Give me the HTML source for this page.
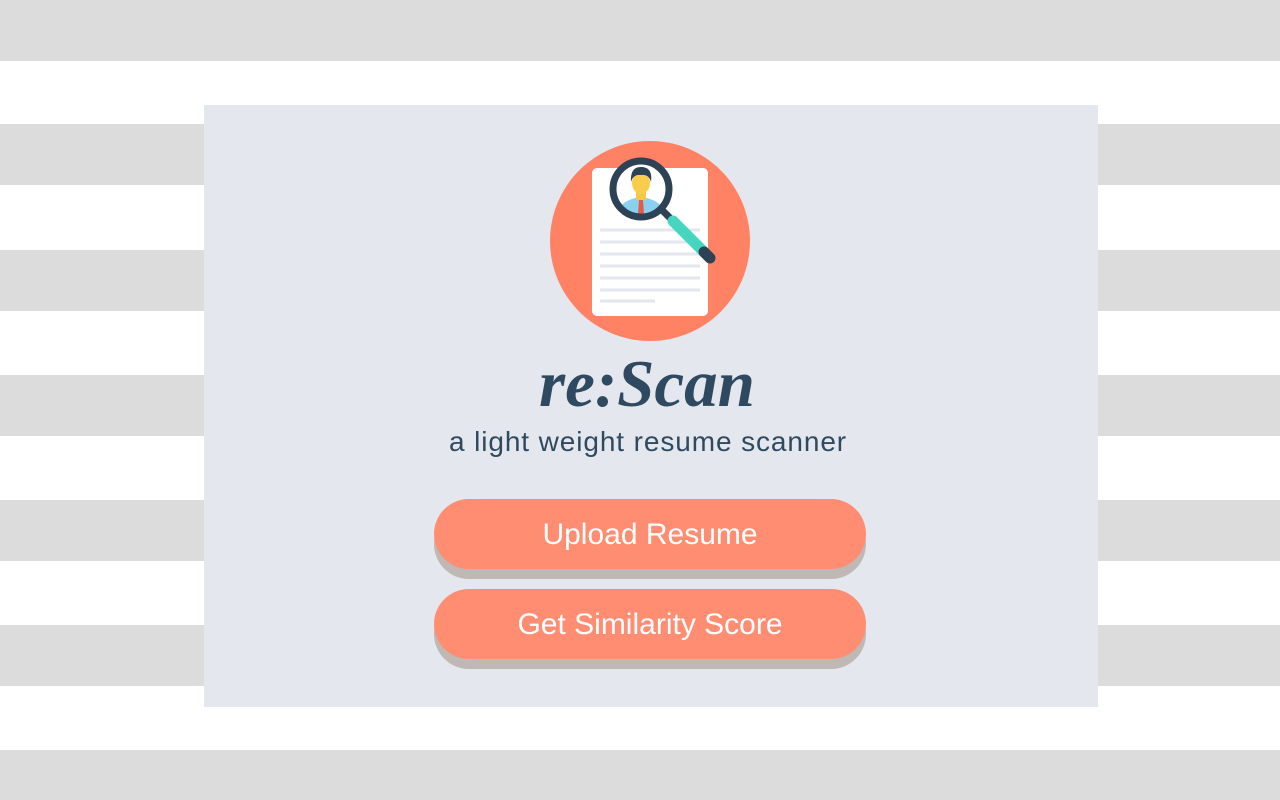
<!DOCTYPE html>
<html><head><style>
html,body{margin:0;padding:0;width:1280px;height:800px;overflow:hidden;background:#fff;position:relative;font-family:"Liberation Sans",sans-serif}
.s{position:absolute;left:0;width:1280px;background:#dcdcdc}
.card{position:absolute;left:204px;top:105px;width:894px;height:602px;background:#e4e7ed}
.title{position:absolute;left:7px;width:1280px;top:346px;text-align:center;font-family:"Liberation Serif",serif;font-style:italic;font-weight:bold;font-size:67px;color:#2f4a60}
.sub{position:absolute;left:8px;width:1280px;top:426px;text-align:center;font-size:28px;letter-spacing:0.9px;color:#2f4a60}
.btn{position:absolute;left:434px;width:432px;height:70px;border-radius:35px;background:#ff8d72;color:#fff;font-size:30px;text-align:center;line-height:72px;box-shadow:0 10px 0 #c0b8b5}
</style></head><body>
<div class="s" style="top:0;height:61px"></div>
<div class="s" style="top:124px;height:61px"></div>
<div class="s" style="top:250px;height:61px"></div>
<div class="s" style="top:375px;height:61px"></div>
<div class="s" style="top:500px;height:61px"></div>
<div class="s" style="top:625px;height:61px"></div>
<div class="s" style="top:750px;height:50px"></div>
<div class="card"></div>
<svg style="position:absolute;left:0;top:0" width="1280" height="800">
<circle cx="650" cy="241" r="100" fill="#ff8264"/>
<rect x="592" y="168" width="116" height="148" rx="5" fill="#fff"/>
<g stroke="#e3e6ec" stroke-width="3">
<line x1="600" y1="230" x2="700" y2="230"/><line x1="600" y1="242" x2="700" y2="242"/>
<line x1="600" y1="254" x2="700" y2="254"/><line x1="600" y1="266" x2="700" y2="266"/>
<line x1="600" y1="278" x2="700" y2="278"/><line x1="600" y1="290" x2="700" y2="290"/>
<line x1="600" y1="301" x2="655" y2="301"/></g>
<circle cx="641" cy="189" r="27" fill="#fff"/>
<path d="M620 207 Q626 199 641 197 Q656 199 662 207 Q652 216 641 216 Q630 216 620 207Z" fill="#8ad0ef"/>
<rect x="636" y="190" width="10" height="10" fill="#f6c945"/>
<ellipse cx="641" cy="183" rx="9" ry="11" fill="#f8cd4c"/>
<path d="M631 182 Q630 167 641 167 Q653 167 651 182 Q649 174 641 175 Q633 174 631 182Z" fill="#2d4255"/>
<path d="M639 200 L643 200 L644 214 L638 214Z" fill="#e75b44"/>
<circle cx="641" cy="189" r="28" fill="none" stroke="#2d4255" stroke-width="7"/>
<line x1="663" y1="211" x2="672" y2="220" stroke="#2d4255" stroke-width="7"/>
<line x1="673" y1="221" x2="706" y2="254" stroke="#46d6c0" stroke-width="11" stroke-linecap="round"/>
<line x1="704" y1="252" x2="710" y2="258" stroke="#2d4255" stroke-width="11" stroke-linecap="round"/>
</svg>
<div class="title">re:Scan</div>
<div class="sub">a light weight resume scanner</div>
<div class="btn" style="top:499px">Upload Resume</div>
<div class="btn" style="top:589px">Get Similarity Score</div>
</body></html>
